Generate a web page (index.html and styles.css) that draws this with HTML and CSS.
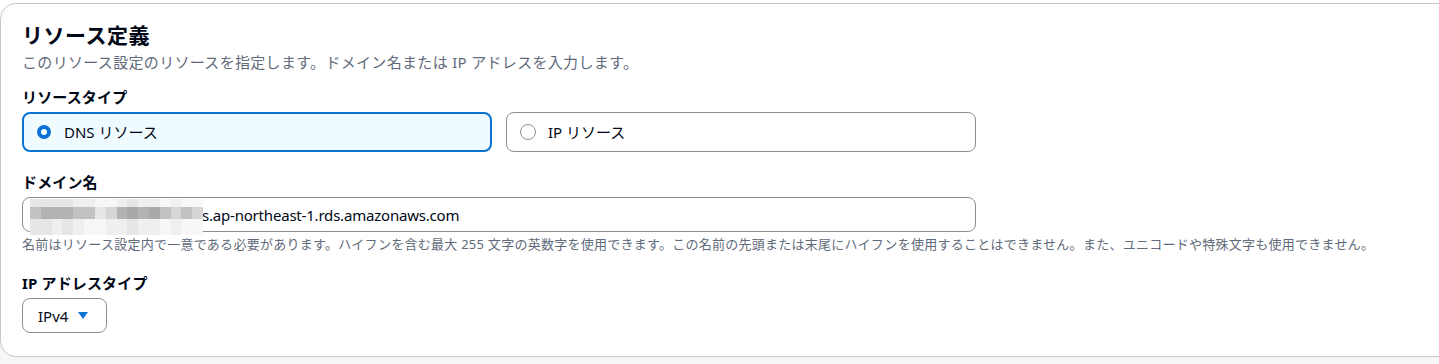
FILE: index.html
```html
<!DOCTYPE html>
<html lang="ja">
<head>
<meta charset="utf-8">
<title>リソース定義</title>
<link rel="stylesheet" href="styles.css">
</head>
<body>
<div class="page">
  <section class="card">
    <h2 class="title">リソース定義</h2>
    <p class="desc">このリソース設定のリソースを指定します。ドメイン名または IP アドレスを入力します。</p>

    <div class="field field-first">
      <div class="label">リソースタイプ</div>
      <div class="tiles">
        <div class="tile tile-selected">
          <span class="radio-box"><span class="radio radio-on"></span></span>
          <span class="tile-text">DNS リソース</span>
        </div>
        <div class="tile">
          <span class="radio-box"><span class="radio"></span></span>
          <span class="tile-text">IP リソース</span>
        </div>
      </div>
    </div>

    <div class="field">
      <div class="label">ドメイン名</div>
      <div class="input">
        <span class="input-text">s.ap-northeast-1.rds.amazonaws.com</span>
        <div class="mosaic" aria-hidden="true">
          <span class="m5"></span><span class="m5"></span><span class="m5"></span><span class="m5"></span><span class="m6"></span><span class="m6"></span><span class="m7"></span><span class="m7"></span><span class="m6"></span><span class="m5"></span><span class="m6"></span><span class="m6"></span><span class="m7"></span><span class="m6"></span><span class="m7"></span><span class="m7"></span>
          <span class="m3"></span><span class="m2"></span><span class="m2"></span><span class="m2"></span><span class="m3"></span><span class="m3"></span><span class="m5"></span><span class="m4"></span><span class="m2"></span><span class="m1"></span><span class="m2"></span><span class="m1"></span><span class="m3"></span><span class="m4"></span><span class="m3"></span><span class="m4"></span>
          <span class="m5"></span><span class="m5"></span><span class="m6"></span><span class="m5"></span><span class="m6"></span><span class="m7"></span><span class="m7"></span><span class="m6"></span><span class="m6"></span><span class="m5"></span><span class="m6"></span><span class="m6"></span><span class="m7"></span><span class="m6"></span><span class="m7"></span><span class="m7"></span>
        </div>
      </div>
      <div class="hint">名前はリソース設定内で一意である必要があります。ハイフンを含む最大 255 文字の英数字を使用できます。この名前の先頭または末尾にハイフンを使用することはできません。また、ユニコードや特殊文字も使用できません。</div>
    </div>

    <div class="field">
      <div class="label">IP アドレスタイプ</div>
      <div class="select">
        <span class="select-text">IPv4</span>
        <svg class="caret" width="10" height="7" viewBox="0 0 10 7"><path d="M0 0H10L5 7Z" fill="#0972d3"/></svg>
      </div>
    </div>
  </section>
  <div class="below"></div>
</div>
</body>
</html>
```

FILE: styles.css
```css
* { box-sizing: border-box; }

html, body {
  margin: 0;
  padding: 0;
  background: #ffffff;
  overflow: hidden;
}

body {
  font-family: "Noto Sans", "Noto Sans CJK JP", sans-serif;
  color: #000716;
  width: 1439px;
  height: 364px;
}

.page {
  padding-top: 3px;
  height: 364px;
  display: flex;
  flex-direction: column;
}

.card {
  margin-right: -40px;
  border: 1px solid #c6c6cd;
  border-radius: 16px;
  background: #ffffff;
  padding: 17px 0 23px 21px;
  position: relative;
  z-index: 1;
}

.below {
  flex: 1;
  background: #f6f6f7;
  margin-top: -16px;
}

.title {
  margin: 0;
  font-size: 21px;
  line-height: 28px;
  font-weight: 700;
  letter-spacing: 0.5px;
}

.desc {
  margin: 2px 0 0;
  font-size: 15px;
  line-height: 22px;
  color: #5f6b7a;
  letter-spacing: 0.32px;
}

.field {
  width: 954px;
  margin-top: 19px;
}

.field-first {
  margin-top: 13px;
}

.label {
  font-size: 15px;
  line-height: 22px;
  font-weight: 700;
  margin-bottom: 4px;
  letter-spacing: 0.15px;
}

.tiles {
  display: grid;
  grid-template-columns: 1fr 1fr;
  column-gap: 14px;
}

.tile {
  height: 40px;
  border: 1px solid #8c8c94;
  border-radius: 8px;
  display: flex;
  align-items: center;
  padding-left: 13px;
  font-size: 15px;
}

.tile-selected {
  border: 2px solid #0972d3;
  background: #f0fbff;
  padding-left: 12px;
}

.radio-box {
  width: 16px;
  height: 16px;
  display: flex;
  align-items: center;
  justify-content: center;
  margin-right: 12px;
}

.radio {
  width: 16px;
  height: 16px;
  border-radius: 50%;
  border: 1.5px solid #8c8c94;
  background: #ffffff;
}

.radio-on {
  width: 14px;
  height: 14px;
  border: 4px solid #0972d3;
}

.tile-text {
  line-height: 22px;
}

.input {
  position: relative;
  height: 35px;
  border: 1px solid #8c8c94;
  border-radius: 8px;
  display: flex;
  align-items: center;
  padding-left: 179px;
  font-size: 15px;
}

.input-text {
  line-height: 22px;
  letter-spacing: -0.2px;
}

.mosaic {
  position: absolute;
  left: 7px;
  top: 1px;
  width: 173px;
  height: 36px;
  display: grid;
  grid-template-columns: repeat(16, 1fr);
  grid-template-rows: 8px 12px 16px;
}

.m1 { background: #a9a9a9; }
.m2 { background: #b3b3b3; }
.m3 { background: #c2c2c2; }
.m4 { background: #d6d6d6; }
.m5 { background: #e6e6e6; }
.m6 { background: #efefef; }
.m7 { background: #f7f7f7; }

.hint {
  margin-top: 3px;
  font-size: 13px;
  line-height: 18px;
  color: #5f6b7a;
  white-space: nowrap;
  letter-spacing: 0.26px;
}

.select {
  width: 85px;
  height: 35px;
  border: 1px solid #8c8c94;
  border-radius: 8px;
  display: flex;
  align-items: center;
  padding-left: 15px;
  font-size: 15px;
}

.select-text {
  line-height: 22px;
  margin-right: 10px;
}

.caret {
  display: block;
}
```
